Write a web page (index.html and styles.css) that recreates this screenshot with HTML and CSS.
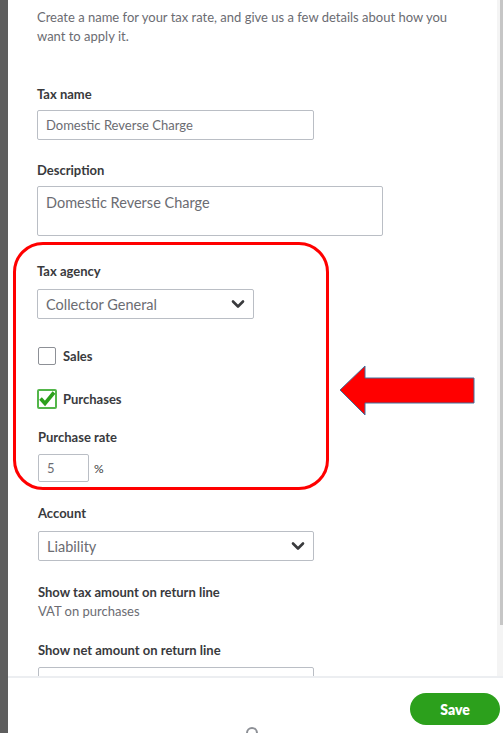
FILE: index.html
```html
<!DOCTYPE html>
<html>
<head>
<meta charset="utf-8">
<link rel="stylesheet" href="styles.css">
</head>
<body>
<div class="app">
  <div class="backdrop"></div>
  <div class="panel">
    <div class="scroller">
      <div class="content">
        <p class="intro">Create a name for your tax rate, and give us a few details about how you want to apply it.</p>

        <div class="label l-taxname">Tax name</div>
        <div class="input w-277"><span class="val">Domestic Reverse Charge</span></div>

        <div class="label l-desc">Description</div>
        <div class="textarea"><span class="val big">Domestic Reverse Charge</span></div>

        <div class="label l-agency">Tax agency</div>
        <div class="select w-217"><span class="val big">Collector General</span>
          <svg class="chev" viewBox="0 0 14 10" width="14" height="10"><path d="M2 2.5 L7 7.5 L12 2.5" fill="none" stroke="#393a3d" stroke-width="2.6" stroke-linecap="round" stroke-linejoin="round"/></svg>
        </div>

        <div class="check c-sales"><span class="box"></span><span class="clabel">Sales</span></div>
        <div class="check c-purch"><span class="box on">
          <svg viewBox="0 0 20 20" width="20" height="20"><path d="M3.5 10.5 L8 15.5 L17 4.5" fill="none" stroke="#2ca01c" stroke-width="3.6" stroke-linejoin="miter"/></svg>
        </span><span class="clabel">Purchases</span></div>

        <div class="label l-rate">Purchase rate</div>
        <div class="rate-row"><div class="input small"><span class="val">5</span></div><span class="pct">%</span></div>

        <div class="label l-account">Account</div>
        <div class="select w-276"><span class="val big">Liability</span>
          <svg class="chev" viewBox="0 0 14 10" width="14" height="10"><path d="M2 2.5 L7 7.5 L12 2.5" fill="none" stroke="#393a3d" stroke-width="2.6" stroke-linecap="round" stroke-linejoin="round"/></svg>
        </div>

        <div class="label l-showtax">Show tax amount on return line</div>
        <div class="plain">VAT on purchases</div>

        <div class="label l-shownet">Show net amount on return line</div>
        <div class="input w-276 cut"></div>
      </div>
      <div class="scrollbar"><div class="thumb"></div></div>
    </div>
    <div class="footer">
      <button class="save">Save</button>
      <span class="help-arc"></span>
    </div>
  </div>

  <div class="annot-box"></div>
  <svg class="annot-arrow" width="140" height="56" viewBox="0 0 140 56">
    <polygon points="1,25 26,1 26,13 135,13 135,38 26,38 26,50" fill="#ff0000" stroke="#41719c" stroke-width="1"/>
  </svg>
</div>
</body>
</html>
```

FILE: styles.css
```css
* { box-sizing: border-box; }
html, body { margin: 0; padding: 0; }
body {
  width: 503px;
  height: 733px;
  overflow: hidden;
  font-family: "Lato", "Open Sans", sans-serif;
  background: #fff;
}
.app {
  position: relative;
  display: flex;
  width: 503px;
  height: 733px;
}
.backdrop {
  width: 8px;
  flex: none;
  background: #5e5e5e;
}
.panel {
  flex: 1;
  display: flex;
  flex-direction: column;
  background: #fff;
}
.scroller {
  height: 676px;
  flex: none;
  display: flex;
  overflow: hidden;
}
.content {
  flex: 1;
  padding: 8px 0 0 29px;
}
.scrollbar {
  width: 6px;
  flex: none;
  background: #f4f4f4;
  display: flex;
  justify-content: flex-end;
}
.thumb {
  width: 3px;
  height: 625px;
  background: #c6c6c6;
}
.intro {
  margin: 0;
  width: 420px;
  font-size: 13px;
  line-height: 19px;
  color: #6b6c72;
}
.label {
  font-size: 13px;
  line-height: 16px;
  font-weight: 700;
  color: #393a3d;
}
.l-taxname { margin-top: 40px; }
.l-desc { margin-top: 22px; }
.l-agency { margin-top: 27px; }
.l-rate { margin-top: 20px; margin-left: 1px; }
.l-account { margin-top: 23px; margin-left: 1px; }
.l-showtax { margin-top: 23px; margin-left: 1px; }
.l-shownet { margin-top: 23px; margin-left: 1px; }

.input, .select, .textarea {
  border: 1px solid #babec5;
  border-radius: 2px;
  background: #fff;
  display: flex;
  align-items: center;
  padding-left: 8px;
}
.input { height: 30px; margin-top: 8px; }
.w-277 { width: 277px; }
.w-276 { width: 276px; margin-left: 1px; }
.w-217 { width: 217px; }
.textarea {
  width: 346px;
  height: 50px;
  margin-top: 8px;
  align-items: flex-start;
  padding-top: 7px;
}
.select {
  height: 30px;
  margin-top: 10px;
  justify-content: space-between;
  padding-right: 8px;
}
.l-account + .select { margin-top: 10px; }
.val {
  font-size: 13px;
  color: #6b6c72;
}
.val.big { font-size: 14.5px; }
.chev { display: block; }

.check {
  display: flex;
  align-items: center;
  gap: 7px;
  margin-left: 1px;
}
.c-sales { margin-top: 28px; height: 18px; }
.c-purch { margin-top: 24px; height: 20px; margin-left: 0; }
.box {
  width: 18px;
  height: 18px;
  border: 1px solid #8d9096;
  border-radius: 2px;
  background: #fff;
  display: block;
}
.box.on {
  width: 20px;
  height: 20px;
  border: 2px solid #53b64a;
  position: relative;
}
.box.on svg {
  position: absolute;
  left: -2px;
  top: -3px;
}
.c-purch .clabel { margin-left: -1px; }
.clabel {
  font-size: 13px;
  font-weight: 700;
  color: #393a3d;
}
.rate-row {
  display: flex;
  align-items: center;
  margin-top: 9px;
  margin-left: 1px;
}
.input.small {
  width: 51px;
  height: 28px;
  margin-top: 0;
}
.pct {
  margin-left: 5px;
  font-size: 12px;
  color: #393a3d;
}
.plain {
  font-size: 13px;
  line-height: 16px;
  color: #6b6c72;
  margin-top: 3px;
  margin-left: 1px;
}
.input.cut { height: 30px; margin-top: 9px; }

.footer {
  flex: 1;
  border-top: 2px solid #eceef1;
  display: flex;
  justify-content: flex-end;
  align-items: flex-start;
  padding: 15px 3px 0 0;
  position: relative;
}
.save {
  width: 90px;
  height: 32px;
  border: none;
  border-radius: 16px;
  background: #2ca01c;
  color: #fff;
  font-family: "Lato", sans-serif;
  font-weight: 800;
  font-size: 14px;
  padding: 0;
}
.help-arc {
  position: absolute;
  left: 238px;
  top: 49px;
  width: 12px;
  height: 12px;
  border: 2px solid #8d9096;
  border-radius: 50%;
}

.annot-box {
  position: absolute;
  left: 13px;
  top: 242px;
  width: 316px;
  height: 248px;
  border: 3px solid #ff0000;
  border-radius: 30px;
  pointer-events: none;
}
.annot-arrow {
  position: absolute;
  left: 339px;
  top: 365px;
}
```
